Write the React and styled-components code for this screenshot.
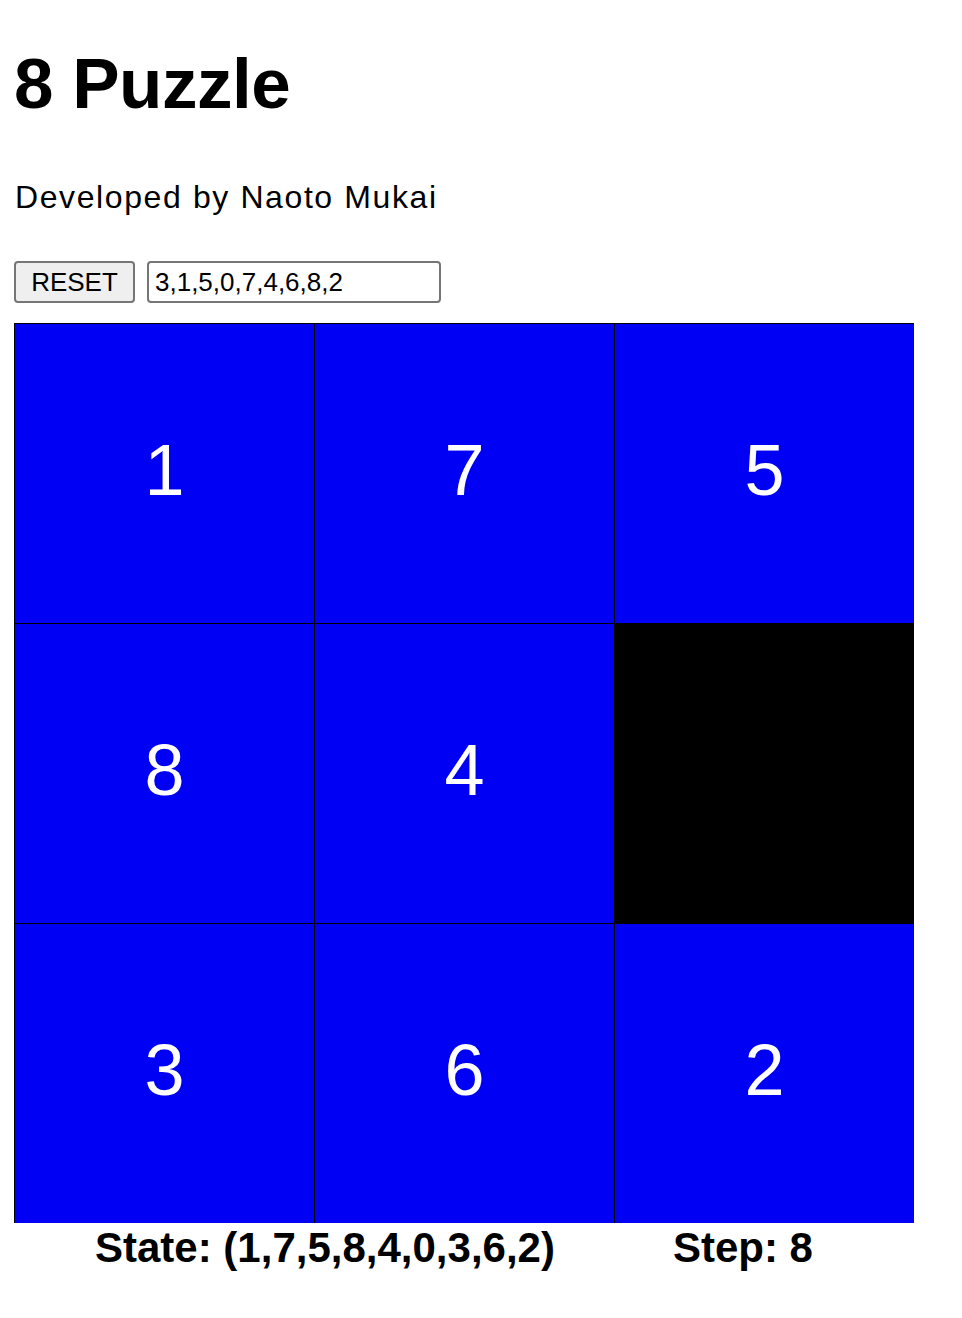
import React, { useState } from 'react';
import styled, { createGlobalStyle } from 'styled-components';

const GlobalStyle = createGlobalStyle`
  html, body {
    margin: 0;
    padding: 0;
    background: #fff;
  }
  body {
    font-family: "Liberation Sans", Arial, sans-serif;
    color: #000;
  }
`;

const Page = styled.div`
  padding: 48px 14px 40px;
`;

const Title = styled.h1`
  margin: 0;
  height: 71px;
  font-size: 71px;
  line-height: 71px;
  font-weight: 700;
  letter-spacing: -0.5px;
`;

const Credit = styled.p`
  margin: 62px 0 0 1px;
  height: 32px;
  font-size: 32px;
  line-height: 32px;
  letter-spacing: 1.6px;
`;

const Controls = styled.div`
  display: flex;
  align-items: center;
  gap: 12px;
  height: 42px;
  margin-top: 48px;
`;

const ResetButton = styled.button`
  box-sizing: border-box;
  width: 121px;
  height: 42px;
  padding: 0;
  font-family: "Liberation Sans", Arial, sans-serif;
  font-size: 26px;
  color: #000;
  background: #efefef;
  border: 2px solid #767676;
  border-radius: 4px;
`;

const StateInput = styled.input`
  box-sizing: border-box;
  width: 294px;
  height: 42px;
  padding: 0 6px;
  font-family: "Liberation Sans", Arial, sans-serif;
  font-size: 26px;
  color: #000;
  background: #fff;
  border: 2px solid #767676;
  border-radius: 4px;
`;

const Board = styled.div`
  display: grid;
  grid-template-columns: repeat(3, 300px);
  grid-template-rows: repeat(3, 300px);
  width: 900px;
  margin-top: 20px;
`;

const Tile = styled.div`
  box-sizing: border-box;
  display: flex;
  align-items: center;
  justify-content: center;
  padding-bottom: 8px;
  border-top: 1px solid #000;
  border-left: 1px solid #000;
  background: ${props => props.empty ? '#000' : '#0000f4'};
  color: #fff;
  font-size: 72px;
  line-height: 1;
`;

const StatusBar = styled.div`
  display: flex;
  gap: 118px;
  padding-left: 81px;
  margin-top: 1px;
`;

const Status = styled.span`
  font-size: 42px;
  font-weight: 700;
  line-height: 1.15;
`;

const App = () => {
  const [input, setInput] = useState('3,1,5,0,7,4,6,8,2');
  const tiles = [1, 7, 5, 8, 4, 0, 3, 6, 2];
  const steps = 8;

  return (
    <Page>
      <GlobalStyle />
      <Title>8 Puzzle</Title>
      <Credit>Developed by Naoto Mukai</Credit>

      <Controls>
        <ResetButton>RESET</ResetButton>
        <StateInput value={input} onChange={e => setInput(e.target.value)} />
      </Controls>

      <Board>
        {tiles.map(n => (
          <Tile key={n} empty={n === 0}>{n !== 0 && n}</Tile>
        ))}
      </Board>

      <StatusBar>
        <Status>State: ({tiles.join(',')})</Status>
        <Status>Step: {steps}</Status>
      </StatusBar>
    </Page>
  );
};

export default App;
